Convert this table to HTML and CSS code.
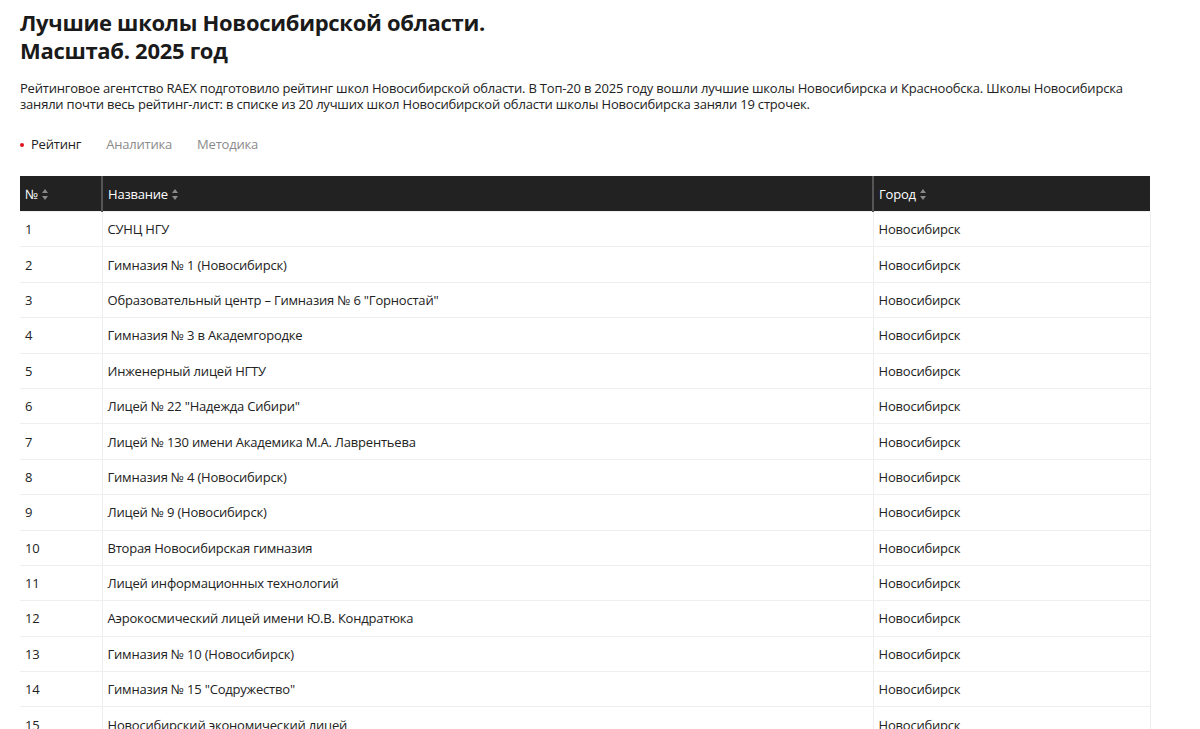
FILE: index.html
```html
<!DOCTYPE html>
<html lang="ru">
<head>
<meta charset="utf-8">
<link rel="stylesheet" href="styles.css">
</head>
<body>
<main class="page">
  <h1 class="title">Лучшие школы Новосибирской области.<br>Масштаб. 2025 год</h1>
  <p class="lead">Рейтинговое агентство RAEX подготовило рейтинг школ Новосибирской области. В Топ-20 в 2025 году вошли лучшие школы Новосибирска и Краснообска. Школы Новосибирска заняли почти весь рейтинг-лист: в списке из 20 лучших школ Новосибирской области школы Новосибирска заняли 19 строчек.</p>
  <nav class="tabs">
    <span class="tab active">Рейтинг</span>
    <span class="tab">Аналитика</span>
    <span class="tab">Методика</span>
  </nav>
  <table class="rating">
    <colgroup>
      <col class="c-num"><col class="c-name"><col class="c-city">
    </colgroup>
    <thead>
      <tr>
        <th>№ <span class="sort"></span></th>
        <th>Название <span class="sort"></span></th>
        <th>Город <span class="sort"></span></th>
      </tr>
    </thead>
    <tbody>
      <tr><td>1</td><td>СУНЦ НГУ</td><td>Новосибирск</td></tr>
      <tr><td>2</td><td>Гимназия № 1 (Новосибирск)</td><td>Новосибирск</td></tr>
      <tr><td>3</td><td>Образовательный центр – Гимназия № 6 "Горностай"</td><td>Новосибирск</td></tr>
      <tr><td>4</td><td>Гимназия № 3 в Академгородке</td><td>Новосибирск</td></tr>
      <tr><td>5</td><td>Инженерный лицей НГТУ</td><td>Новосибирск</td></tr>
      <tr><td>6</td><td>Лицей № 22 "Надежда Сибири"</td><td>Новосибирск</td></tr>
      <tr><td>7</td><td>Лицей № 130 имени Академика М.А. Лаврентьева</td><td>Новосибирск</td></tr>
      <tr><td>8</td><td>Гимназия № 4 (Новосибирск)</td><td>Новосибирск</td></tr>
      <tr><td>9</td><td>Лицей № 9 (Новосибирск)</td><td>Новосибирск</td></tr>
      <tr><td>10</td><td>Вторая Новосибирская гимназия</td><td>Новосибирск</td></tr>
      <tr><td>11</td><td>Лицей информационных технологий</td><td>Новосибирск</td></tr>
      <tr><td>12</td><td>Аэрокосмический лицей имени Ю.В. Кондратюка</td><td>Новосибирск</td></tr>
      <tr><td>13</td><td>Гимназия № 10 (Новосибирск)</td><td>Новосибирск</td></tr>
      <tr><td>14</td><td>Гимназия № 15 "Содружество"</td><td>Новосибирск</td></tr>
      <tr><td>15</td><td>Новосибирский экономический лицей</td><td>Новосибирск</td></tr>
      <tr><td>16</td><td>Лицей № 200</td><td>Новосибирск</td></tr>
    </tbody>
  </table>
</main>
</body>
</html>
```

FILE: styles.css
```css
html, body {
  margin: 0;
  padding: 0;
  background: #fff;
}
body {
  font-family: "Open Sans", "Noto Sans", sans-serif;
  color: #222;
}
.page {
  padding: 8px 50px 0 20px;
}
.title {
  margin: 0;
  font-size: 22px;
  line-height: 28px;
  font-weight: 700;
  color: #1a1a1a;
  letter-spacing: -0.3px;
}
.lead {
  margin: 16px 0 0;
  font-size: 13px;
  line-height: 16px;
  letter-spacing: -0.2px;
  color: #222;
}
.tabs {
  display: flex;
  gap: 25px;
  margin-top: 24px;
  font-size: 13px;
  line-height: 16px;
  letter-spacing: -0.2px;
}
.tab {
  color: #8a8a8a;
}
.tab.active {
  color: #222;
  position: relative;
  padding-left: 11px;
}
.tab.active::before {
  content: "";
  position: absolute;
  left: 0;
  top: 7px;
  width: 4px;
  height: 4px;
  border-radius: 50%;
  background: #e0161e;
}
.rating {
  margin-top: 24px;
  width: 1130px;
  border-collapse: collapse;
  font-size: 13px;
  letter-spacing: -0.2px;
  table-layout: fixed;
}
.c-num { width: 82px; }
.c-name { width: 771px; }
.c-city { width: 277px; }
.rating th {
  background: #222;
  color: #fff;
  font-weight: 400;
  text-align: left;
  height: 35px;
  padding: 0 5px;
  border-left: 2px solid #555;
}
.rating th:first-child { border-left: none; }
.rating td {
  height: 34.4px;
  padding: 0 5px;
  border: 1px solid #eeeeee;
  color: #222;
  vertical-align: middle;
}
.rating td:first-child { border-left: none; }
.sort {
  display: inline-block;
  width: 7px;
  height: 11px;
  vertical-align: -1px;
  margin-left: 1px;
  position: relative;
}
.sort::before, .sort::after {
  content: "";
  position: absolute;
  left: 0;
  border-left: 3.5px solid transparent;
  border-right: 3.5px solid transparent;
}
.sort::before {
  top: 0;
  border-bottom: 4px solid #8a8a8a;
}
.sort::after {
  bottom: 0;
  border-top: 4px solid #8a8a8a;
}
```
